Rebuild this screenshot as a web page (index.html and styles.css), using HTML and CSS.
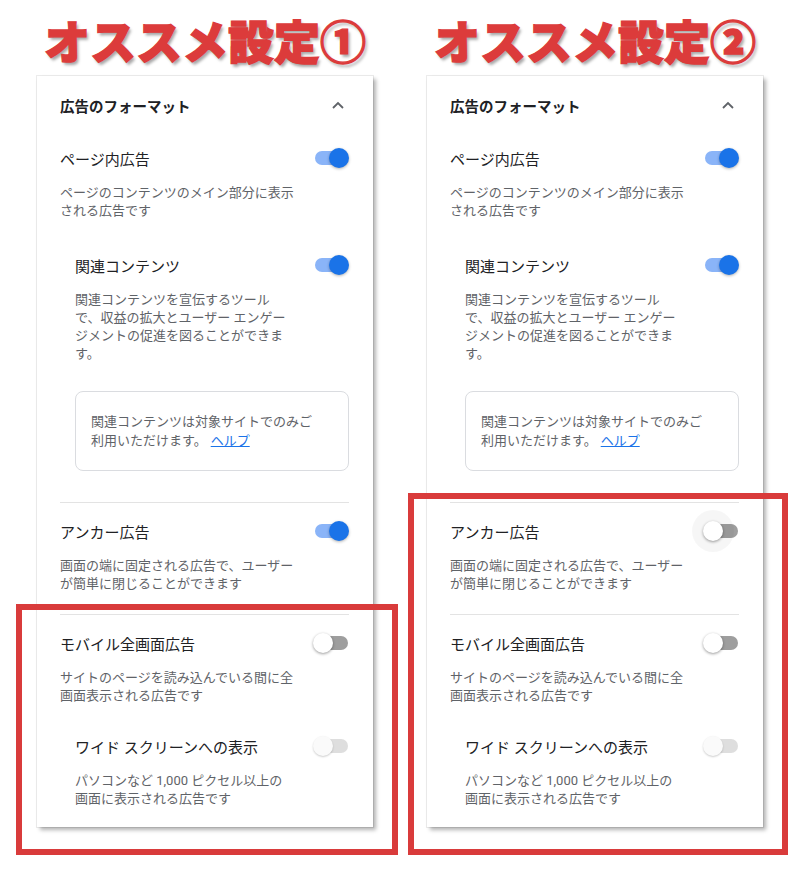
FILE: index.html
```html
<!DOCTYPE html>
<html lang="ja">
<head>
    <meta charset="UTF-8">
    <title>オススメ設定</title>
    <link rel="stylesheet" href="styles.css">
</head>
<body>
    <div class="page">
        <section class="panel">
            <h2 class="panel-title">オススメ設定①</h2>
            <div class="card">
                <div class="card-header">
                    <span>広告のフォーマット</span>
                    <svg class="chevron" width="12" height="8" viewBox="0 0 12 8"><polyline points="1,7 6,2 11,7" fill="none" stroke="#5f6368" stroke-width="1.8"/></svg>
                </div>
                <div class="setting">
                    <div class="setting-row"><span class="setting-name">ページ内広告</span><span class="toggle on"></span></div>
                    <p class="setting-desc">ページのコンテンツのメイン部分に表示される広告です</p>
                </div>
                <div class="setting nested">
                    <div class="setting-row"><span class="setting-name">関連コンテンツ</span><span class="toggle on"></span></div>
                    <p class="setting-desc">関連コンテンツを宣伝するツールで、収益の拡大とユーザー エンゲージメントの促進を図ることができます。</p>
                </div>
                <div class="notice">関連コンテンツは対象サイトでのみご利用いただけます。<a href="#">ヘルプ</a></div>
                <hr class="divider">
                <div class="setting">
                    <div class="setting-row"><span class="setting-name">アンカー広告</span><span class="toggle on"></span></div>
                    <p class="setting-desc">画面の端に固定される広告で、ユーザーが簡単に閉じることができます</p>
                </div>
                <hr class="divider">
                <div class="setting">
                    <div class="setting-row"><span class="setting-name">モバイル全画面広告</span><span class="toggle"></span></div>
                    <p class="setting-desc">サイトのページを読み込んでいる間に全画面表示される広告です</p>
                </div>
                <div class="setting nested last">
                    <div class="setting-row"><span class="setting-name">ワイド スクリーンへの表示</span><span class="toggle disabled"></span></div>
                    <p class="setting-desc">パソコンなど 1,000 ピクセル以上の画面に表示される広告です</p>
                </div>
            </div>
            <div class="highlight highlight-left"></div>
        </section>

        <section class="panel">
            <h2 class="panel-title">オススメ設定②</h2>
            <div class="card">
                <div class="card-header">
                    <span>広告のフォーマット</span>
                    <svg class="chevron" width="12" height="8" viewBox="0 0 12 8"><polyline points="1,7 6,2 11,7" fill="none" stroke="#5f6368" stroke-width="1.8"/></svg>
                </div>
                <div class="setting">
                    <div class="setting-row"><span class="setting-name">ページ内広告</span><span class="toggle on"></span></div>
                    <p class="setting-desc">ページのコンテンツのメイン部分に表示される広告です</p>
                </div>
                <div class="setting nested">
                    <div class="setting-row"><span class="setting-name">関連コンテンツ</span><span class="toggle on"></span></div>
                    <p class="setting-desc">関連コンテンツを宣伝するツールで、収益の拡大とユーザー エンゲージメントの促進を図ることができます。</p>
                </div>
                <div class="notice">関連コンテンツは対象サイトでのみご利用いただけます。<a href="#">ヘルプ</a></div>
                <hr class="divider">
                <div class="setting">
                    <div class="setting-row"><span class="setting-name">アンカー広告</span><span class="toggle focused"></span></div>
                    <p class="setting-desc">画面の端に固定される広告で、ユーザーが簡単に閉じることができます</p>
                </div>
                <hr class="divider">
                <div class="setting">
                    <div class="setting-row"><span class="setting-name">モバイル全画面広告</span><span class="toggle"></span></div>
                    <p class="setting-desc">サイトのページを読み込んでいる間に全画面表示される広告です</p>
                </div>
                <div class="setting nested last">
                    <div class="setting-row"><span class="setting-name">ワイド スクリーンへの表示</span><span class="toggle disabled"></span></div>
                    <p class="setting-desc">パソコンなど 1,000 ピクセル以上の画面に表示される広告です</p>
                </div>
            </div>
            <div class="highlight highlight-right"></div>
        </section>
    </div>
</body>
</html>
```

FILE: styles.css
```css
body {
    margin: 0;
    background-color: white;
    font-family: Roboto, "Noto Sans CJK JP", sans-serif;
    color: #202124;
}
.page {
    display: flex;
    min-height: 871px;
}
.panel {
    position: relative;
    width: 390px;
    padding-top: 12px;
}
.panel-title {
    margin: 0 0 10px 37px;
    width: 336px;
    height: 54px;
    line-height: 54px;
    text-align: center;
    font-family: "Noto Sans CJK JP", sans-serif;
    font-size: 46px;
    font-weight: 900;
    color: #dc3b3b;
    -webkit-text-stroke: 1.3px #dc3b3b;
    text-shadow: 2px 3px 3px rgba(0,0,0,0.35);
}
.card {
    margin-left: 37px;
    width: 336px;
    box-sizing: border-box;
    padding: 18px 24px 19px 23px;
    background-color: white;
    box-shadow: 3px 3px 4px rgba(0,0,0,0.3), 0 0 0 1px #ececec;
}
.card-header {
    display: flex;
    justify-content: space-between;
    align-items: center;
    height: 22px;
    margin-bottom: 7px;
    font-size: 14.5px;
    font-weight: bold;
}
.chevron {
    margin-right: 5px;
}
.setting {
    margin-top: 30px;
}
.setting.nested {
    margin-top: 33px;
}
.setting.nested.last {
    margin-top: 29px;
}
.divider + .setting {
    margin-top: 16px;
}
.setting-row {
    display: flex;
    justify-content: space-between;
    align-items: center;
    height: 24px;
}
.setting-name {
    font-size: 15px;
}
.setting-desc {
    margin: 14px 0 0;
    width: 240px;
    font-size: 13px;
    line-height: 18px;
    color: #5f6368;
}
.nested {
    padding-left: 15px;
}
.nested .setting-desc {
    width: 215px;
}
.notice {
    margin: 28px 0 0 15px;
    padding: 20px 24px 20px 15px;
    border: 1px solid #dadce0;
    border-radius: 8px;
    font-size: 13px;
    line-height: 19px;
    color: #5f6368;
}
.notice a {
    margin-left: 4px;
    color: #1a73e8;
}
.divider {
    margin: 31px 0 0;
    border: none;
    border-top: 1px solid #e3e3e3;
}
.setting + .divider {
    margin-top: 21px;
}

/* switches */
.toggle {
    position: relative;
    width: 36px;
    height: 20px;
}
.toggle::before {
    content: "";
    position: absolute;
    top: 3px;
    left: 2px;
    right: 1px;
    height: 14px;
    border-radius: 7px;
    background-color: #9e9e9e;
}
.toggle::after {
    content: "";
    position: absolute;
    top: 0;
    left: 0;
    width: 20px;
    height: 20px;
    border-radius: 50%;
    background-color: white;
    box-shadow: 0 1px 3px rgba(0,0,0,0.4);
}
.toggle.on::before {
    background-color: #8ab4f8;
}
.toggle.on::after {
    left: 16px;
    background-color: #1a73e8;
    box-shadow: 0 1px 3px rgba(0,0,0,0.3);
}
.toggle.disabled::before {
    background-color: #dedede;
}
.toggle.disabled::after {
    background-color: #fafafa;
    box-shadow: 0 1px 2px rgba(0,0,0,0.2);
}
.toggle.focused::after {
    box-shadow: 0 1px 3px rgba(0,0,0,0.4), 0 0 0 11px rgba(0,0,0,0.035);
}

/* red frames drawn over the screenshot */
.highlight {
    position: absolute;
    box-sizing: border-box;
    border: 6px solid #d93b3b;
}
.highlight-left {
    left: 16px;
    top: 604px;
    width: 382px;
    height: 251px;
}
.highlight-right {
    left: 18px;
    top: 493px;
    width: 380px;
    height: 362px;
}
```
